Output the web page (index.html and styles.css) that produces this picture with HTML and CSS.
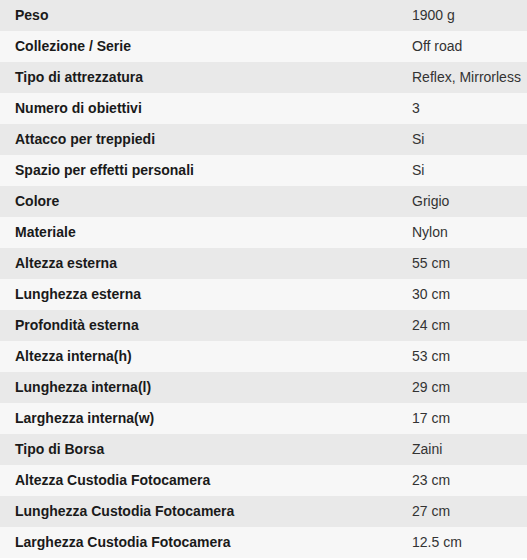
FILE: index.html
```html
<!DOCTYPE html>
<html lang="it">
<head>
<meta charset="utf-8">
<title>Specifiche</title>
<link rel="stylesheet" href="styles.css">
</head>
<body>
<table class="specs">
<tbody>
<tr><th>Peso</th><td>1900 g</td></tr>
<tr><th>Collezione / Serie</th><td>Off road</td></tr>
<tr><th>Tipo di attrezzatura</th><td>Reflex, Mirrorless</td></tr>
<tr><th>Numero di obiettivi</th><td>3</td></tr>
<tr><th>Attacco per treppiedi</th><td>Si</td></tr>
<tr><th>Spazio per effetti personali</th><td>Si</td></tr>
<tr><th>Colore</th><td>Grigio</td></tr>
<tr><th>Materiale</th><td>Nylon</td></tr>
<tr><th>Altezza esterna</th><td>55 cm</td></tr>
<tr><th>Lunghezza esterna</th><td>30 cm</td></tr>
<tr><th>Profondità esterna</th><td>24 cm</td></tr>
<tr><th>Altezza interna(h)</th><td>53 cm</td></tr>
<tr><th>Lunghezza interna(l)</th><td>29 cm</td></tr>
<tr><th>Larghezza interna(w)</th><td>17 cm</td></tr>
<tr><th>Tipo di Borsa</th><td>Zaini</td></tr>
<tr><th>Altezza Custodia Fotocamera</th><td>23 cm</td></tr>
<tr><th>Lunghezza Custodia Fotocamera</th><td>27 cm</td></tr>
<tr><th>Larghezza Custodia Fotocamera</th><td>12.5 cm</td></tr>
</tbody>
</table>
</body>
</html>
```
FILE: styles.css
```css
html, body {
  margin: 0;
  padding: 0;
  background: #ffffff;
}
body {
  font-family: "Liberation Sans", Arial, sans-serif;
  font-size: 14px;
  color: #222222;
}
.specs {
  width: 527px;
  border-collapse: collapse;
  border-spacing: 0;
  table-layout: fixed;
}
.specs tr {
  height: 31px;
}
.specs tr:nth-child(odd) {
  background: #e9e9e9;
}
.specs tr:nth-child(even) {
  background: #f7f7f7;
}
.specs th,
.specs td {
  padding: 0 15px 2px;
  text-align: left;
  vertical-align: middle;
  line-height: 16px;
  white-space: nowrap;
}
.specs th {
  width: 367px;
  font-weight: bold;
  color: #1a1a1a;
}
.specs td {
  font-weight: normal;
  color: #333333;
}
```
